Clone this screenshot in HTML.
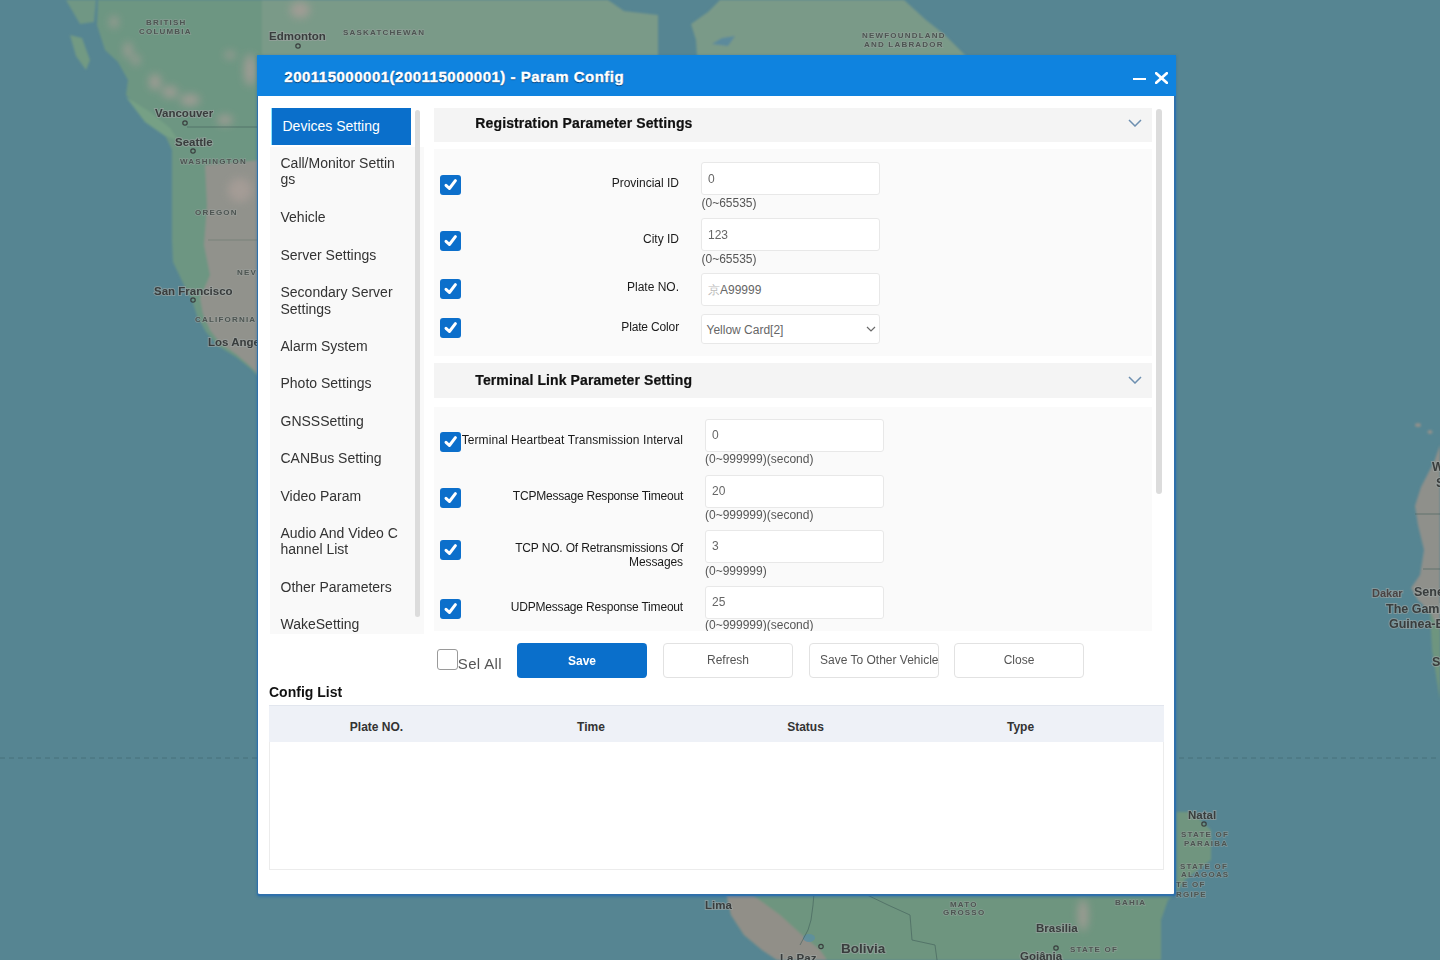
<!DOCTYPE html>
<html><head><meta charset="utf-8"><style>
*{box-sizing:border-box;margin:0;padding:0}
html,body{width:1440px;height:960px;overflow:hidden;font-family:"Liberation Sans",sans-serif;background:#568592;position:relative}
#map{position:absolute;left:0;top:0}
.t{position:absolute;white-space:nowrap}
.r{position:absolute}
.clip{position:absolute;overflow:hidden}
.cb{position:absolute;width:21px;height:20px;background:#0c6fcb;border-radius:3px}
.cb svg{position:absolute;left:0;top:0}
.in{position:absolute;background:#fff;border:1px solid #e8e8e8;border-radius:3px}
.btn{position:absolute;background:#fff;border:1px solid #e2e2e2;border-radius:4px}
</style></head><body>
<svg id="map" width="1440" height="960" viewBox="0 0 1440 960">
<defs>
<filter id="bl" x="-10%" y="-10%" width="120%" height="120%"><feGaussianBlur stdDeviation="1.2"/></filter>
<filter id="bl3" x="-20%" y="-20%" width="140%" height="140%"><feGaussianBlur stdDeviation="4"/></filter>
</defs>
<rect width="1440" height="960" fill="#568592"/>
<g filter="url(#bl)">
<!-- North America -->
<path d="M98,0 L97,25 L105,50 L118,62 L128,80 L126,95 L150,120 L165,135 L172,150 L172,200 L172,240 L173,262 L184,285 L192,300 L197,316 L206,332 L218,346 L236,357 L251,369 L262,380 L262,0 Z" fill="#6d9682"/><path d="M66,0 L96,0 L94,22 L80,24 Z" fill="#6f9784"/><path d="M70,35 L82,38 L90,60 L86,70 L76,56 Z" fill="#729a83"/><path d="M126,97 L150,112 L170,128 L178,140 L165,136 L145,122 Z" fill="#76a085"/>
<path d="M205,165 L262,160 L262,378 L250,366 L236,354 L220,343 L210,330 L203,314 L200,298 L210,275 L204,245 L207,205 Z" fill="#91928c"/>
<path d="M262,0 L608,0 L624,11 L658,15 L658,56 L262,56 Z" fill="#7a9a88"/>
<path d="M720,0 L904,0 L926,20 L945,35 L966,56 L697,56 L696,40 L691,24 L708,12 Z" fill="#7a9a88"/><path d="M712,44 L722,38 L735,36 L728,46 Z" fill="#5b8a9c"/>
<!-- Africa -->
<path d="M1440,445 L1434,462 L1421,487 L1415,506 L1418,525 L1424,550 L1420,575 L1411,588 L1418,600 L1430,612 L1440,631 Z" fill="#8f908b"/><path d="M1430,612 L1440,631 L1440,700 L1432,650 Z" fill="#6e957f"/><ellipse cx="1418" cy="425" rx="3" ry="2" fill="#8f908b"/><ellipse cx="1430" cy="432" rx="2.5" ry="2" fill="#8f908b"/>
<!-- South America -->
<path d="M726,893 L731,915 L744,935 L762,950 L777,960 L1161,960 L1161,920 L1168,900 L1176,893 Z" fill="#6e957f"/>
<path d="M726,893 L731,915 L744,935 L762,950 L777,960 L827,960 L820,950 L802,935 L780,915 L750,893 Z" fill="#918f88"/>
<path d="M1176,812 L1192,812 L1211,830 L1211,860 L1185,880 L1176,893 Z" fill="#6f957f"/>
</g>
<g filter="url(#bl3)" fill="#a89e98" opacity=".85">
<ellipse cx="114" cy="22" rx="4" ry="6"/>
<ellipse cx="128" cy="50" rx="4" ry="8"/>
<ellipse cx="136" cy="60" rx="4" ry="5"/>
<ellipse cx="155" cy="82" rx="6" ry="8"/>
<ellipse cx="170" cy="92" rx="8" ry="6"/>
<ellipse cx="190" cy="100" rx="10" ry="6"/>
<ellipse cx="225" cy="120" rx="8" ry="5"/>
<ellipse cx="250" cy="70" rx="6" ry="16"/>
<ellipse cx="230" cy="55" rx="5" ry="4"/>
<ellipse cx="240" cy="190" rx="12" ry="12"/>
<ellipse cx="1083" cy="915" rx="5" ry="16"/>
<ellipse cx="300" cy="10" rx="10" ry="8"/>
</g>
<g fill="#5b8fa2" opacity=".8">
<ellipse cx="809" cy="938" rx="6" ry="4"/>
</g>
<line x1="0" y1="758" x2="1440" y2="758" stroke="#46707b" stroke-width="1" stroke-dasharray="5,4"/>
<g stroke="#3f5a58" stroke-width="0.8" fill="none" opacity=".7">
<path d="M187,127 L262,127"/>
<path d="M208,240 L262,240" opacity=".5"/>
<path d="M1415,514 L1440,514"/><path d="M1423,569 L1440,569"/>
<path d="M863,893 L888,905 L910,915 L912,940 L935,945 L937,960"/>
<path d="M814,893 L813,905 L811,920 L808,930 L800,945"/>
</g>
<g font-family="Liberation Sans" font-weight="bold" fill="#393d3d" font-size="11.5" stroke="#9fa5a3" stroke-width="2" stroke-opacity=".6" paint-order="stroke">
<text x="155" y="117">Vancouver</text>
<text x="175" y="146">Seattle</text>
<text x="154" y="295">San Francisco</text>
<text x="208" y="346">Los Angeles</text>
<text x="269" y="40">Edmonton</text>
<text x="1372" y="597" font-size="11" fill="#4a4444">Dakar</text>
<text x="1386" y="613" font-size="12.5">The Gambia</text>
<text x="1389" y="628" font-size="12.5">Guinea-Bissau</text>
<text x="1414" y="596" font-size="12.5">Senegal</text>
<text x="1432" y="666" font-size="12.5">S</text>
<text x="1432" y="471" font-size="12.5">W</text><text x="1436" y="487" font-size="12.5">S</text>
<text x="1188" y="819">Natal</text>
<text x="705" y="909">Lima</text>
<text x="780" y="962" font-size="11.5">La Paz</text>
<text x="841" y="953" font-size="13.5">Bolivia</text>
<text x="1036" y="932">Brasilia</text>
<text x="1020" y="960">Goiânia</text>
</g>
<g font-family="Liberation Sans" font-weight="bold" fill="#4d5552" font-size="8" letter-spacing="1.2" stroke="#9fa5a3" stroke-width="1.5" stroke-opacity=".5" paint-order="stroke">
<text x="146" y="25">BRITISH</text><text x="139" y="34">COLUMBIA</text>
<text x="343" y="35">SASKATCHEWAN</text>
<text x="180" y="164">WASHINGTON</text>
<text x="195" y="215">OREGON</text>
<text x="237" y="275">NEV</text>
<text x="195" y="322">CALIFORNIA</text>
<text x="862" y="38">NEWFOUNDLAND</text><text x="864" y="47">AND LABRADOR</text>
<text x="950" y="907">MATO</text><text x="943" y="915">GROSSO</text>
<text x="1115" y="905">BAHIA</text>
<text x="1070" y="952">STATE OF</text>
<text x="1181" y="837">STATE OF</text><text x="1184" y="846">PARAIBA</text>
<text x="1180" y="869">STATE OF</text><text x="1181" y="877">ALAGOAS</text>
<text x="1176" y="887">TE OF</text><text x="1176" y="897">RGIPE</text>
</g>
<g fill="none" stroke="#3a3f3f" stroke-width="1.2">
<circle cx="185" cy="123" r="2.2"/><circle cx="193" cy="151" r="2.2"/><circle cx="193" cy="300" r="2.2"/>
<circle cx="298" cy="46" r="2.2"/><circle cx="1204" cy="824" r="2.2"/><circle cx="1056" cy="948" r="2.2"/>
<circle cx="821" cy="946.5" r="2.2"/>
</g>
</svg>
<div class="r" style="left:257px;top:55px;width:919px;height:841px;background:#fff;border-style:solid;border-color:#2f70aa;border-width:0 2px 2px 1px;border-radius:1px 1px 3px 3px;box-shadow:0 1px 3px 0 rgba(20,100,180,.55)"></div>
<div class="r" style="left:257px;top:55px;width:919px;height:41px;background:#0f83df;border-radius:1px 1px 0 0"></div>
<div class="t" style="left:284.30px;top:68.70px;font-size:15px;line-height:15px;color:#fff;font-weight:bold;letter-spacing:.5px;text-shadow:0 1px 1px rgba(0,30,70,.75);-webkit-text-stroke:.35px #fff">200115000001(200115000001) - Param Config</div>
<div class="r" style="left:1133px;top:78px;width:13px;height:2px;background:#fff"></div>
<svg class="r" style="left:1155px;top:72px" width="13" height="12" viewBox="0 0 13 12"><path d="M1.2,1.2 L11.8,10.8 M11.8,1.2 L1.2,10.8" stroke="#fff" stroke-width="2.7" stroke-linecap="round"/></svg>
<div class="r" style="left:270px;top:147px;width:154px;height:487px;background:#f9f9f9"></div>
<div class="r" style="left:271px;top:108px;width:140px;height:37px;background:#0a6fcb;border-left:1px solid #8ae6ff"></div>
<div class="t" style="left:282.50px;top:118.95px;font-size:14px;line-height:14px;color:#fff;">Devices Setting</div>
<div class="clip" style="left:0;top:0;width:1440px;height:633px"><div class="t" style="left:280.50px;top:155.65px;font-size:14px;line-height:14px;color:#333;">Call/Monitor Settin</div>
<div class="t" style="left:280.50px;top:172.15px;font-size:14px;line-height:14px;color:#333;">gs</div>
<div class="t" style="left:280.50px;top:210.35px;font-size:14px;line-height:14px;color:#333;">Vehicle</div>
<div class="t" style="left:280.50px;top:247.75px;font-size:14px;line-height:14px;color:#333;">Server Settings</div>
<div class="t" style="left:280.50px;top:285.45px;font-size:14px;line-height:14px;color:#333;">Secondary Server</div>
<div class="t" style="left:280.50px;top:301.75px;font-size:14px;line-height:14px;color:#333;">Settings</div>
<div class="t" style="left:280.50px;top:339.15px;font-size:14px;line-height:14px;color:#333;">Alarm System</div>
<div class="t" style="left:280.50px;top:376.45px;font-size:14px;line-height:14px;color:#333;">Photo Settings</div>
<div class="t" style="left:280.50px;top:413.95px;font-size:14px;line-height:14px;color:#333;">GNSSSetting</div>
<div class="t" style="left:280.50px;top:451.15px;font-size:14px;line-height:14px;color:#333;">CANBus Setting</div>
<div class="t" style="left:280.50px;top:488.75px;font-size:14px;line-height:14px;color:#333;">Video Param</div>
<div class="t" style="left:280.50px;top:525.85px;font-size:14px;line-height:14px;color:#333;">Audio And Video C</div>
<div class="t" style="left:280.50px;top:542.35px;font-size:14px;line-height:14px;color:#333;">hannel List</div>
<div class="t" style="left:280.50px;top:579.85px;font-size:14px;line-height:14px;color:#333;">Other Parameters</div>
<div class="t" style="left:280.50px;top:617.05px;font-size:14px;line-height:14px;color:#333;">WakeSetting</div>
</div>
<div class="r" style="left:415px;top:110px;width:5px;height:507px;background:#dcdcdc;border-radius:3px"></div>
<div class="clip" style="left:0;top:0;width:1440px;height:631px"><div class="r" style="left:434px;top:108px;width:718px;height:34px;background:#f4f4f4"></div>
<div class="t" style="left:475.30px;top:116.05px;font-size:14px;line-height:14px;color:#111;font-weight:bold;letter-spacing:.13px;-webkit-text-stroke:.2px #111">Registration Parameter Settings</div>
<svg class="r" style="left:1128px;top:119px" width="14" height="8" viewBox="0 0 14 8"><path d="M1,1 L7,7 L13,1" fill="none" stroke="#6d8fb0" stroke-width="1.5"/></svg>
<div class="r" style="left:434px;top:149px;width:718px;height:207px;background:#fafafa"></div>
<div class="cb" style="left:440px;top:175px"><svg width="21" height="20" viewBox="0 0 21 20"><path d="M6,10.3 L9.4,13.5 L15.4,5.6" fill="none" stroke="#fff" stroke-width="3" stroke-linecap="round" stroke-linejoin="round"/></svg></div>
<div class="t" style="right:761.00px;text-align:right;top:177.34px;font-size:12px;line-height:12px;color:#1a1a1a;">Provincial ID</div>
<div class="in" style="left:701px;top:162px;width:179px;height:33px"></div>
<div class="t" style="left:708.00px;top:173.04px;font-size:12px;line-height:12px;color:#666;">0</div>
<div class="t" style="left:701.50px;top:197.14px;font-size:12px;line-height:12px;color:#555;">(0~65535)</div>
<div class="cb" style="left:440px;top:231px"><svg width="21" height="20" viewBox="0 0 21 20"><path d="M6,10.3 L9.4,13.5 L15.4,5.6" fill="none" stroke="#fff" stroke-width="3" stroke-linecap="round" stroke-linejoin="round"/></svg></div>
<div class="t" style="right:761.00px;text-align:right;top:232.54px;font-size:12px;line-height:12px;color:#1a1a1a;">City ID</div>
<div class="in" style="left:701px;top:218px;width:179px;height:33px"></div>
<div class="t" style="left:708.00px;top:228.84px;font-size:12px;line-height:12px;color:#666;">123</div>
<div class="t" style="left:701.50px;top:252.84px;font-size:12px;line-height:12px;color:#555;">(0~65535)</div>
<div class="cb" style="left:440px;top:279px"><svg width="21" height="20" viewBox="0 0 21 20"><path d="M6,10.3 L9.4,13.5 L15.4,5.6" fill="none" stroke="#fff" stroke-width="3" stroke-linecap="round" stroke-linejoin="round"/></svg></div>
<div class="t" style="right:761.00px;text-align:right;top:281.14px;font-size:12px;line-height:12px;color:#1a1a1a;">Plate NO.</div>
<div class="in" style="left:701px;top:273px;width:179px;height:33px"></div>
<div class="t" style="left:708.00px;top:284.24px;font-size:12px;line-height:12px;color:#666;"><span style="color:#bbb">京</span>A99999</div>
<div class="cb" style="left:440px;top:318px"><svg width="21" height="20" viewBox="0 0 21 20"><path d="M6,10.3 L9.4,13.5 L15.4,5.6" fill="none" stroke="#fff" stroke-width="3" stroke-linecap="round" stroke-linejoin="round"/></svg></div>
<div class="t" style="right:761.00px;text-align:right;top:320.64px;font-size:12px;line-height:12px;color:#1a1a1a;letter-spacing:-.15px">Plate Color</div>
<div class="in" style="left:701px;top:314px;width:179px;height:30px"></div>
<div class="t" style="left:706.50px;top:323.84px;font-size:12px;line-height:12px;color:#666;">Yellow Card[2]</div>
<svg class="r" style="left:866px;top:326px" width="10" height="6" viewBox="0 0 10 6"><path d="M1,1 L5,5 L9,1" fill="none" stroke="#6a6a6a" stroke-width="1.2"/></svg>
<div class="r" style="left:434px;top:363px;width:718px;height:35px;background:#f4f4f4"></div>
<div class="t" style="left:475.30px;top:372.65px;font-size:14px;line-height:14px;color:#111;font-weight:bold;letter-spacing:.1px;-webkit-text-stroke:.2px #111">Terminal Link Parameter Setting</div>
<svg class="r" style="left:1128px;top:376px" width="14" height="8" viewBox="0 0 14 8"><path d="M1,1 L7,7 L13,1" fill="none" stroke="#6d8fb0" stroke-width="1.5"/></svg>
<div class="r" style="left:434px;top:407px;width:718px;height:240px;background:#fafafa"></div>
<div class="cb" style="left:440px;top:432px"><svg width="21" height="20" viewBox="0 0 21 20"><path d="M6,10.3 L9.4,13.5 L15.4,5.6" fill="none" stroke="#fff" stroke-width="3" stroke-linecap="round" stroke-linejoin="round"/></svg></div>
<div class="t" style="right:757.00px;text-align:right;top:434.14px;font-size:12px;line-height:12px;color:#1a1a1a;letter-spacing:0.08px">Terminal Heartbeat Transmission Interval</div>
<div class="in" style="left:705px;top:419px;width:179px;height:33px"></div>
<div class="t" style="left:712.00px;top:429.04px;font-size:12px;line-height:12px;color:#666;">0</div>
<div class="t" style="left:705.00px;top:453.04px;font-size:12px;line-height:12px;color:#555;">(0~999999)(second)</div>
<div class="cb" style="left:440px;top:488px"><svg width="21" height="20" viewBox="0 0 21 20"><path d="M6,10.3 L9.4,13.5 L15.4,5.6" fill="none" stroke="#fff" stroke-width="3" stroke-linecap="round" stroke-linejoin="round"/></svg></div>
<div class="t" style="right:757.00px;text-align:right;top:489.84px;font-size:12px;line-height:12px;color:#1a1a1a;letter-spacing:-0.22px">TCPMessage Response Timeout</div>
<div class="in" style="left:705px;top:475px;width:179px;height:33px"></div>
<div class="t" style="left:712.00px;top:485.04px;font-size:12px;line-height:12px;color:#666;">20</div>
<div class="t" style="left:705.00px;top:508.84px;font-size:12px;line-height:12px;color:#555;">(0~999999)(second)</div>
<div class="cb" style="left:440px;top:539.5px"><svg width="21" height="20" viewBox="0 0 21 20"><path d="M6,10.3 L9.4,13.5 L15.4,5.6" fill="none" stroke="#fff" stroke-width="3" stroke-linecap="round" stroke-linejoin="round"/></svg></div>
<div class="t" style="right:757.00px;text-align:right;top:541.54px;font-size:12px;line-height:12px;color:#1a1a1a;letter-spacing:-0.16px">TCP NO. Of Retransmissions Of</div>
<div class="t" style="right:757.00px;text-align:right;top:555.84px;font-size:12px;line-height:12px;color:#1a1a1a;letter-spacing:-0.1px">Messages</div>
<div class="in" style="left:705px;top:530px;width:179px;height:33px"></div>
<div class="t" style="left:712.00px;top:540.34px;font-size:12px;line-height:12px;color:#666;">3</div>
<div class="t" style="left:705.00px;top:564.64px;font-size:12px;line-height:12px;color:#555;">(0~999999)</div>
<div class="cb" style="left:440px;top:599px"><svg width="21" height="20" viewBox="0 0 21 20"><path d="M6,10.3 L9.4,13.5 L15.4,5.6" fill="none" stroke="#fff" stroke-width="3" stroke-linecap="round" stroke-linejoin="round"/></svg></div>
<div class="t" style="right:757.00px;text-align:right;top:600.84px;font-size:12px;line-height:12px;color:#1a1a1a;letter-spacing:-0.19px">UDPMessage Response Timeout</div>
<div class="in" style="left:705px;top:586px;width:179px;height:33px"></div>
<div class="t" style="left:712.00px;top:596.04px;font-size:12px;line-height:12px;color:#666;">25</div>
<div class="t" style="left:705.00px;top:619.04px;font-size:12px;line-height:12px;color:#555;">(0~999999)(second)</div>
</div>
<div class="r" style="left:1156px;top:109px;width:6px;height:385px;background:#dcdcdc;border-radius:3px"></div>
<div class="r" style="left:437px;top:649px;width:21px;height:21px;background:#fff;border:1px solid #9a9a9a;border-radius:3px"></div>
<div class="t" style="left:457.80px;top:656.10px;font-size:15px;line-height:15px;color:#555;letter-spacing:.35px">Sel All</div>
<div class="r" style="left:517px;top:643px;width:130px;height:35px;background:#0a6fcb;border-radius:4px"></div>
<div class="t" style="left:282.00px;width:600px;text-align:center;top:654.54px;font-size:12px;line-height:12px;color:#fff;font-weight:bold;">Save</div>
<div class="btn" style="left:663px;top:643px;width:130px;height:35px"></div>
<div class="t" style="left:428.00px;width:600px;text-align:center;top:653.74px;font-size:12px;line-height:12px;color:#555;">Refresh</div>
<div class="btn" style="left:809px;top:643px;width:130px;height:35px"></div>
<div class="clip" style="left:809px;top:643px;width:129px;height:35px"><div class="t" style="left:11.00px;top:10.74px;font-size:12px;line-height:12px;color:#555;">Save To Other Vehicle</div>
</div>
<div class="btn" style="left:954px;top:643px;width:130px;height:35px"></div>
<div class="t" style="left:719.00px;width:600px;text-align:center;top:653.74px;font-size:12px;line-height:12px;color:#555;">Close</div>
<div class="t" style="left:269.00px;top:684.65px;font-size:14px;line-height:14px;color:#111;font-weight:bold;">Config List</div>
<div class="r" style="left:269px;top:705px;width:895px;height:165px;background:#fff;border:1px solid #ececec"></div>
<div class="r" style="left:269px;top:705px;width:895px;height:37px;background:#eef1f7;border-top:1px solid #e2e6ee"></div>
<div class="t" style="left:76.50px;width:600px;text-align:center;top:720.54px;font-size:12px;line-height:12px;color:#333;font-weight:bold;">Plate NO.</div>
<div class="t" style="left:291.00px;width:600px;text-align:center;top:720.54px;font-size:12px;line-height:12px;color:#333;font-weight:bold;">Time</div>
<div class="t" style="left:505.50px;width:600px;text-align:center;top:720.54px;font-size:12px;line-height:12px;color:#333;font-weight:bold;">Status</div>
<div class="t" style="left:720.50px;width:600px;text-align:center;top:720.54px;font-size:12px;line-height:12px;color:#333;font-weight:bold;">Type</div>
</body></html>
